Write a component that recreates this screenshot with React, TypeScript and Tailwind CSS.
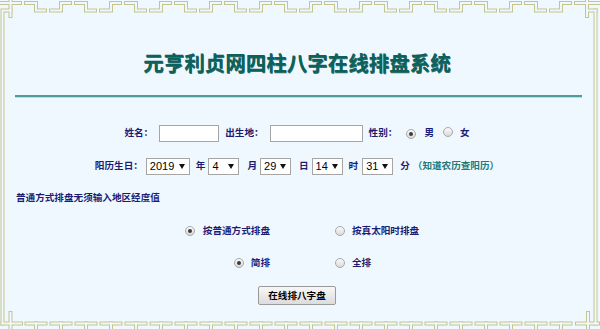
import React from "react";

const OL = "#c4c48c";
const BG = "#f0f8ff";

function framePaths(): string[] {
  const d: string[] = [];
  d.push("M2.5,323.5 V10.5 H10.5");
  d.push("M10.5,0 V16");
  d.push("M0,3 H20");
  for (let i = 0; i < 22; i++) {
    const o = 24 + i * 25;
    if (i % 2 === 0) d.push(`M${o + 2},3 H${o + 12} V10.5 H${o + 21}`);
    else d.push(`M${o + 2},10.5 H${o + 12} V3 H${o + 21}`);
  }
  d.push("M587,0 V16");
  d.push("M576,3 H600");
  d.push("M595.5,10.5 V323.5");
  d.push("M587,10.5 H595.5");
  d.push("M10.5,313 V330");
  d.push("M2.5,323.5 H21");
  for (let o = 25; o <= 550; o += 25) {
    d.push(`M${o + 1.5},323.5 H${o + 20.5}`);
    d.push(`M${o + 11},323.5 V331`);
  }
  d.push("M588,313 V330");
  d.push("M577,323.5 H598");
  return d;
}

function Frame() {
  const paths = framePaths();
  return (
    <svg
      className="absolute inset-0 pointer-events-none"
      width={600}
      height={329}
      viewBox="0 0 600 329"
    >
      <g stroke={OL} strokeWidth={4} fill="none" strokeLinecap="square" strokeLinejoin="miter">
        {paths.map((p, i) => (
          <path key={i} d={p} />
        ))}
      </g>
      <g stroke={BG} strokeWidth={2} fill="none" strokeLinecap="square" strokeLinejoin="miter">
        {paths.map((p, i) => (
          <path key={i} d={p} />
        ))}
      </g>
    </svg>
  );
}

function Radio({ checked }: { checked?: boolean }) {
  return (
    <span className="inline-flex w-[10px] h-[10px] rounded-full border border-[#a8a8a8] bg-gradient-to-b from-[#fbfbfb] to-[#d9d9d9] items-center justify-center shrink-0">
      {checked && <span className="w-[4px] h-[4px] rounded-full bg-[#3c3c3c]" />}
    </span>
  );
}

function Sel({ value, w }: { value: string; w: string }) {
  return (
    <span
      className={`inline-flex h-[17px] ${w} border border-[#a5a5a5] bg-white items-center justify-between pl-[3px] pr-[4px] shrink-0`}
    >
      <span className="text-[11px] text-black leading-none font-normal font-['Liberation_Sans',Arial,sans-serif]">
        {value}
      </span>
      <svg width="6" height="5" viewBox="0 0 6 5">
        <path d="M0,0 H6 L3,5 Z" fill="#111" />
      </svg>
    </span>
  );
}

export default function App() {
  const cjk = "font-['Noto_Sans_CJK_SC','Noto_Sans',sans-serif]";
  return (
    <div className={`relative w-[600px] h-[329px] bg-[#f0f8ff] overflow-hidden ${cjk}`}>
      <Frame />
      <div className="flex flex-col ml-[5px] mr-[11px] text-[9.6px] leading-none text-[#1c1c72] font-semibold">
        <div className="pt-[49px] h-[75px] flex justify-center">
          <h1 className="h-[26px] leading-[26px] text-[20.5px] font-bold text-[#0b625c] [text-shadow:0.5px_0.5px_0_#3a6f6c]">
            元亨利贞网四柱八字在线排盘系统
          </h1>
        </div>
        <div className="mt-[20px] ml-[10px] mr-[7px] h-[3px] border-t-2 border-[#4f9c9c] border-b border-b-[#c3dcdc]" />
        <div className="mt-[25px] h-[20px] flex items-center justify-center">
          <span>姓名：</span>
          <span className="ml-[6px] w-[60px] h-[17px] border border-[#a5a5a5] bg-white" />
          <span className="ml-[6px]">出生地：</span>
          <span className="ml-[6px] w-[93px] h-[17px] border border-[#a5a5a5] bg-white" />
          <span className="ml-[6px]">性别：</span>
          <span className="ml-[9px]"><Radio checked /></span>
          <span className="ml-[8px]">男</span>
          <span className="ml-[9px]"><Radio /></span>
          <span className="ml-[7px]">女</span>
        </div>
        <div className="mt-[13px] h-[20px] flex items-center justify-center">
          <span>阳历生日：</span>
          <span className="ml-[3px]"><Sel value="2019" w="w-[44px]" /></span>
          <span className="ml-[6px]">年</span>
          <span className="ml-[3px]"><Sel value="4" w="w-[31px]" /></span>
          <span className="ml-[8px]">月</span>
          <span className="ml-[3px]"><Sel value="29" w="w-[31px]" /></span>
          <span className="ml-[8px]">日</span>
          <span className="ml-[3px]"><Sel value="14" w="w-[31px]" /></span>
          <span className="ml-[6px]">时</span>
          <span className="ml-[4px]"><Sel value="31" w="w-[31px]" /></span>
          <span className="ml-[7px]">分</span>
          <span className="ml-[3px] text-[#237a78]">（知道农历查阳历）</span>
        </div>
        <div className="mt-[12px] h-[20px] flex items-center pl-[11px]">
          普通方式排盘无须输入地区经度值
        </div>
        <div className="mt-[13px] h-[20px] grid grid-cols-2">
          <div className="flex items-center justify-end pr-[27px] gap-[8px]">
            <Radio checked />
            <span>按普通方式排盘</span>
          </div>
          <div className="flex items-center pl-[38px] gap-[7px]">
            <Radio />
            <span>按真太阳时排盘</span>
          </div>
        </div>
        <div className="mt-[12px] h-[20px] grid grid-cols-2">
          <div className="flex items-center justify-end pr-[27px] gap-[7px]">
            <Radio checked />
            <span>简排</span>
          </div>
          <div className="flex items-center pl-[38px] gap-[7px]">
            <Radio />
            <span>全排</span>
          </div>
        </div>
        <div className="mt-[13px] flex justify-center">
          <button className="w-[78px] h-[19px] border border-[#9a9a9a] rounded-[2px] bg-gradient-to-b from-[#f7f7f7] to-[#dcdcdc] text-black text-[9.6px] font-semibold leading-none">
            在线排八字盘
          </button>
        </div>
      </div>
    </div>
  );
}
